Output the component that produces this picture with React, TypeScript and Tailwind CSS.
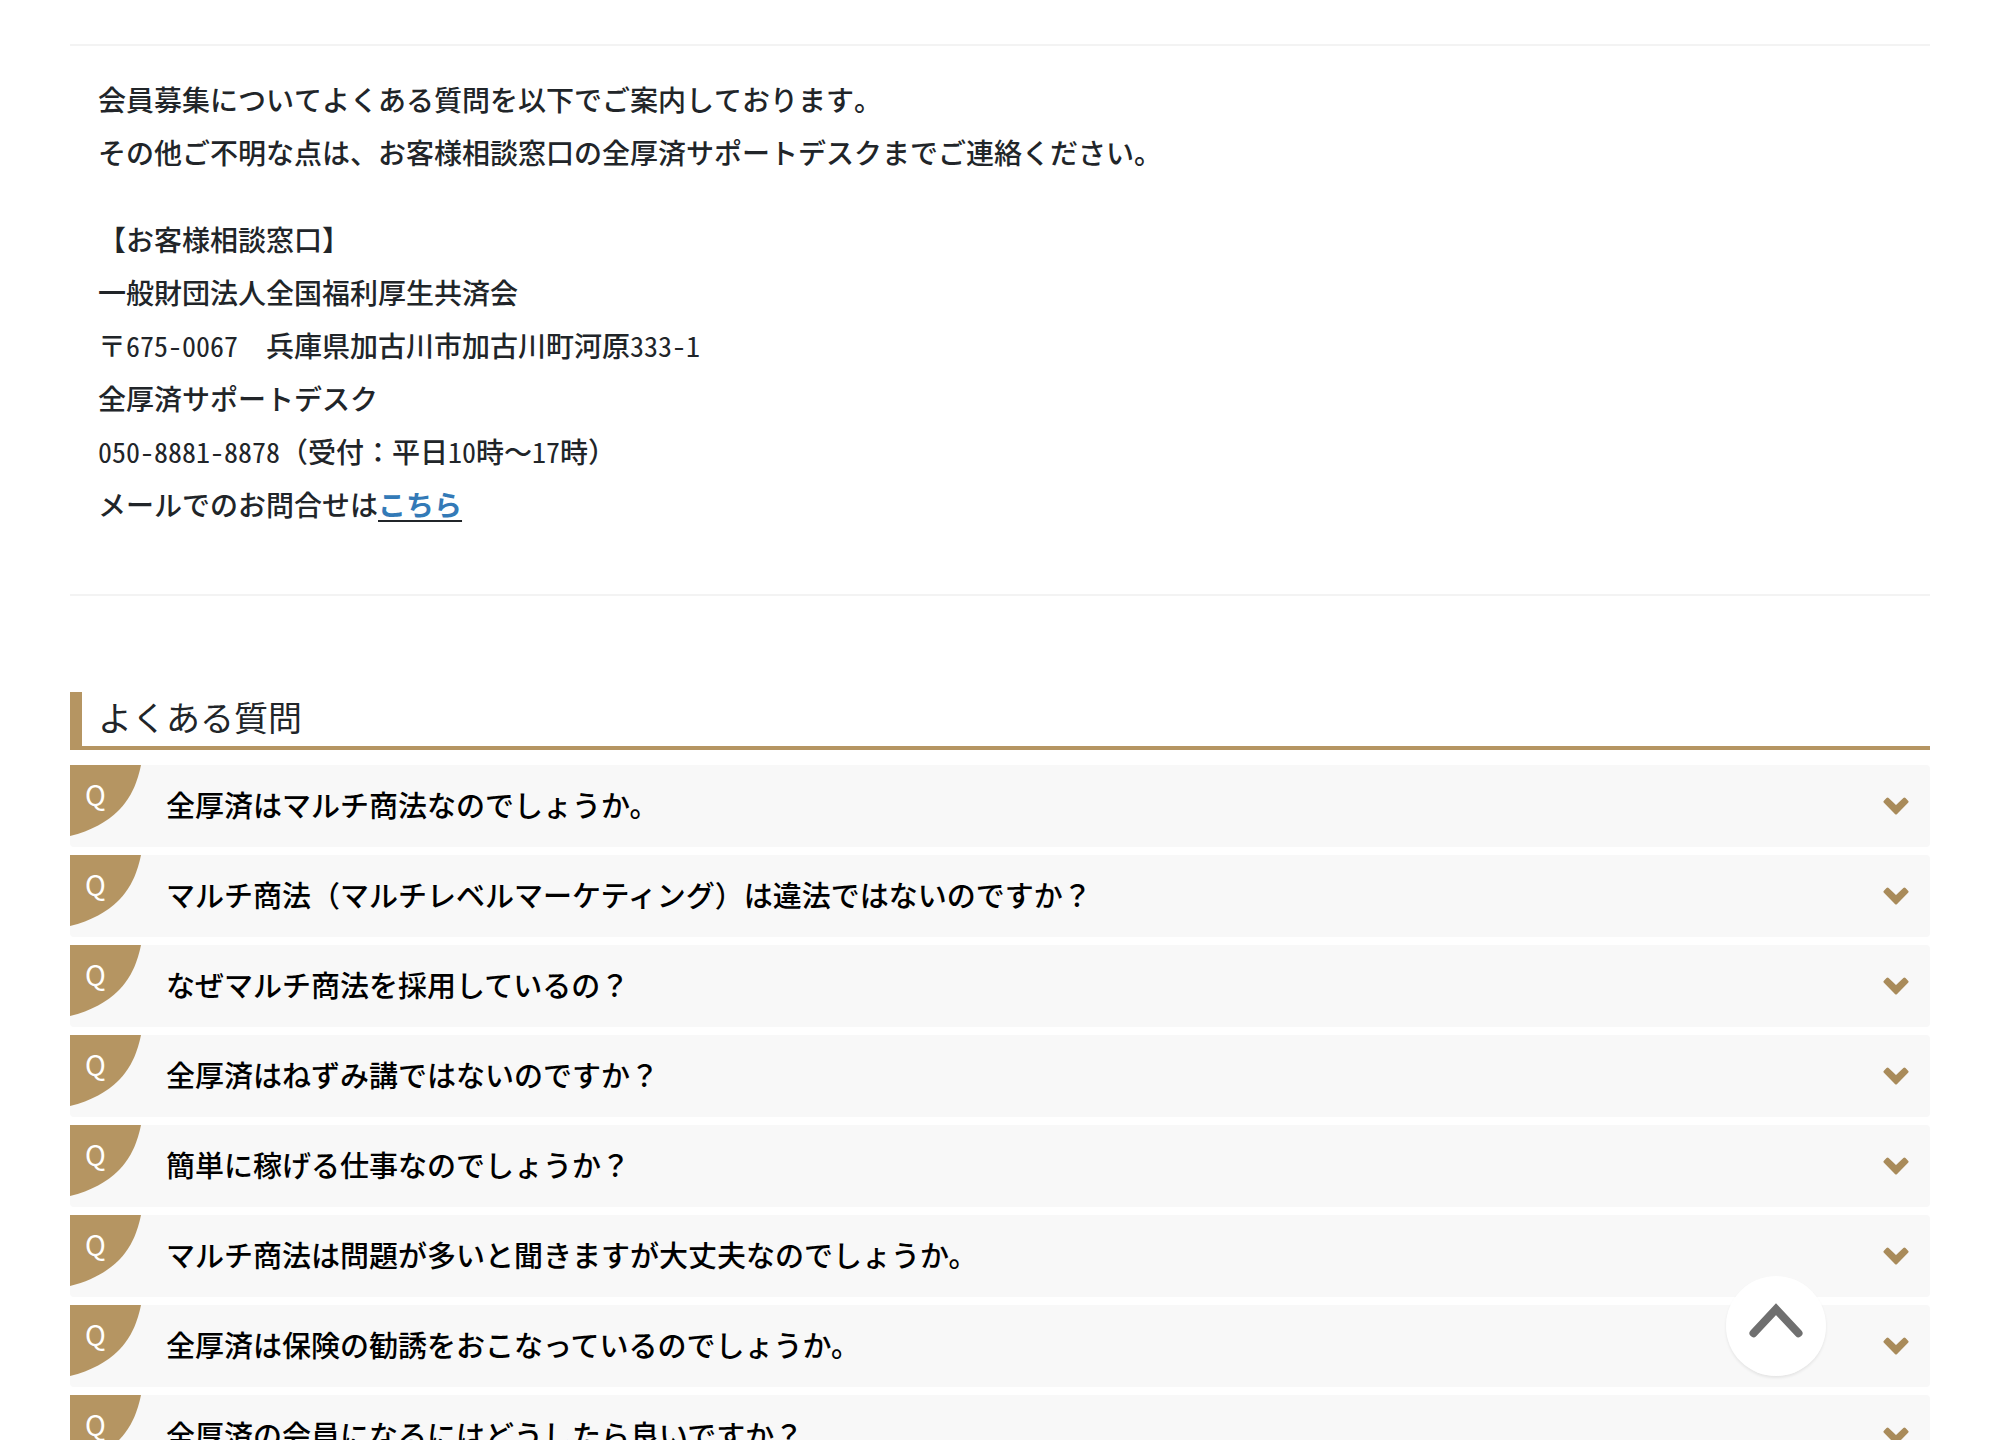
import { useState } from "react";
import { clsx } from "clsx";

const QUESTIONS = [
  "全厚済はマルチ商法なのでしょうか。",
  "マルチ商法（マルチレベルマーケティング）は違法ではないのですか？",
  "なぜマルチ商法を採用しているの？",
  "全厚済はねずみ講ではないのですか？",
  "簡単に稼げる仕事なのでしょうか？",
  "マルチ商法は問題が多いと聞きますが大丈夫なのでしょうか。",
  "全厚済は保険の勧誘をおこなっているのでしょうか。",
  "全厚済の会員になるにはどうしたら良いですか？",
];

function QuestionMark() {
  return (
    <span className="relative block w-[71px] h-[71px] shrink-0 self-start">
      <svg className="block w-full h-full" viewBox="0 0 71 71" fill="#b59562" aria-hidden="true">
        <path d="M0 0H71C66 25 56 38 48 46C38 56 21 66 0 71Z" />
      </svg>
      <span className="absolute left-[15px] top-[11px] text-[28px] leading-9 font-normal text-white">Q</span>
    </span>
  );
}

function Chevron({ open }: { open: boolean }) {
  return (
    <svg
      className={clsx("w-[26px] h-[18px] shrink-0", open && "rotate-180")}
      viewBox="0 0 26 18"
      fill="#a98b5a"
      stroke="#a98b5a"
      strokeWidth={3}
      strokeLinejoin="round"
      aria-hidden="true"
    >
      <path d="M4.6 2.1L13 10L21.4 2.1L24 4.8L13 16L2 4.8Z" />
    </svg>
  );
}

function FaqItem({ question }: { question: string }) {
  const [open, setOpen] = useState(false);

  return (
    <li>
      <button
        type="button"
        aria-expanded={open}
        onClick={() => setOpen((o) => !o)}
        className="flex w-full min-h-[82px] items-center rounded-sm bg-[#f8f8f8] pr-[21px] text-left text-[29px] leading-10 font-medium text-black"
      >
        <QuestionMark />
        <span className="flex-1 pl-[25px] pb-1">{question}</span>
        <Chevron open={open} />
      </button>
    </li>
  );
}

// half-width digits, so they line up with the kana grid
function Digits({ children }: { children: string }) {
  return <span className="font-['Noto_Sans_Mono_CJK_JP',monospace]">{children}</span>;
}

export default function App() {
  return (
    <div className="min-h-screen bg-white px-[70px] pt-11 text-[#212529] font-['Noto_Sans_CJK_JP',sans-serif]">
      {/* Contact */}
      <section className="border-y-2 border-[#f3f3f3] px-7 pt-[27px] pb-[63px] text-[28px] leading-[53px] font-medium [font-kerning:none]">
        <p>
          会員募集についてよくある質問を以下でご案内しております。
          <br />
          その他ご不明な点は、お客様相談窓口の全厚済サポートデスクまでご連絡ください。
        </p>
        <p className="mt-[34px]">
          【お客様相談窓口】
          <br />
          一般財団法人全国福利厚生共済会
          <br />
          〒<Digits>675-0067</Digits>　兵庫県加古川市加古川町河原<Digits>333-1</Digits>
          <br />
          全厚済サポートデスク
          <br />
          <Digits>050-8881-8878</Digits>（受付：平日<Digits>10</Digits>時～<Digits>17</Digits>時）
          <br />
          メールでのお問合せは
          <a href="#contact" className="font-bold text-[#337ab7] underline decoration-[#212529] decoration-2 underline-offset-4">
            こちら
          </a>
        </p>
      </section>

      {/* FAQ */}
      <section className="mt-24 pb-12">
        <h2 className="border-l-12 border-b-4 border-[#b59562] px-4 pb-1 text-[34px] leading-[50px]">
          よくある質問
        </h2>
        <ul className="mt-[15px] flex flex-col gap-2">
          {QUESTIONS.map((q) => (
            <FaqItem key={q} question={q} />
          ))}
        </ul>
      </section>

      {/* Back to top */}
      <button
        type="button"
        aria-label="ページの先頭へ戻る"
        onClick={() => window.scrollTo({ top: 0, behavior: "smooth" })}
        className="fixed right-[174px] bottom-16 flex size-[100px] items-center justify-center rounded-full bg-white/90 shadow-[0_2px_3px_rgba(0,0,0,0.08)]"
      >
        <svg className="size-[60px]" viewBox="0 0 60 60" fill="none" stroke="#6f6f6f" strokeWidth={8} strokeLinecap="round" aria-hidden="true">
          <path d="M7.5 37.2L30 13.2L52.5 37.2" />
        </svg>
      </button>
    </div>
  );
}
